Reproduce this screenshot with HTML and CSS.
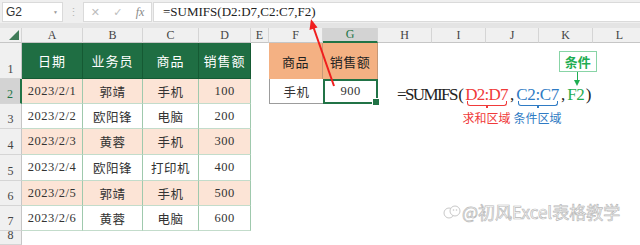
FILE: index.html
```html
<!DOCTYPE html>
<html lang="zh-CN">
<head>
    <meta charset="UTF-8">
    <meta name="viewport" content="width=device-width, initial-scale=1.0">
    <title>SUMIFS 示例</title>
    <link rel="stylesheet" href="styles.css">
</head>
<body>
    <div class="fbar">
        <div class="namebox">G2 <span class="dd">&#9660;</span></div>
        <div class="grip">&#8942;</div>
        <div class="fbtns"><span>&#10005;</span><span>&#10003;</span><span class="fxi">fx</span></div>
        <div class="finput">=SUMIFS(D2:D7,C2:C7,F2)</div>
    </div>
    <div class="gap"></div>

    <div class="sheet">
        <div class="ch corner"><span class="tri"></span></div>
        <div class="ch">A</div><div class="ch">B</div><div class="ch">C</div><div class="ch">D</div>
        <div class="ch">E</div><div class="ch">F</div><div class="ch sel-ch">G</div><div class="ch">H</div>
        <div class="ch">I</div><div class="ch">J</div><div class="ch">K</div><div class="ch">L</div>

        <div class="rh">1</div>
        <div class="hd">日期</div><div class="hd">业务员</div><div class="hd">商品</div><div class="hd">销售额</div>
        <div></div>
        <div class="og">商品</div><div class="og">销售额</div>
        <div></div><div></div><div></div><div></div><div></div>

        <div class="rh sel-rh">2</div>
        <div class="pk">2023/2/1</div><div class="pk">郭靖</div><div class="pk">手机</div><div class="pk">100</div>
        <div></div>
        <div class="bx">手机</div><div class="act">900</div>
        <div></div><div></div><div></div><div></div><div></div>

        <div class="rh">3</div>
        <div class="wt">2023/2/2</div><div class="wt">欧阳锋</div><div class="wt">电脑</div><div class="wt">200</div>
        <div></div><div></div><div></div><div></div><div></div><div></div><div></div><div></div>

        <div class="rh">4</div>
        <div class="pk">2023/2/3</div><div class="pk">黄蓉</div><div class="pk">手机</div><div class="pk">300</div>
        <div></div><div></div><div></div><div></div><div></div><div></div><div></div><div></div>

        <div class="rh">5</div>
        <div class="wt">2023/2/4</div><div class="wt">欧阳锋</div><div class="wt">打印机</div><div class="wt">400</div>
        <div></div><div></div><div></div><div></div><div></div><div></div><div></div><div></div>

        <div class="rh">6</div>
        <div class="pk">2023/2/5</div><div class="pk">郭靖</div><div class="pk">手机</div><div class="pk">500</div>
        <div></div><div></div><div></div><div></div><div></div><div></div><div></div><div></div>

        <div class="rh">7</div>
        <div class="wt">2023/2/6</div><div class="wt">黄蓉</div><div class="wt">电脑</div><div class="wt">600</div>
        <div></div><div></div><div></div><div></div><div></div><div></div><div></div><div></div>

        <div class="rh">8</div>
        <div></div><div></div><div></div><div></div><div></div><div></div>
        <div></div><div></div><div></div><div></div><div></div><div></div>
    </div>

    <!-- 公式说明 -->
    <div class="note"><span class="fn">=SUMIFS</span><span class="p">(</span><span class="seg red s1">D2:D7<i class="brk"></i><b class="lab">求和区域</b></span><span class="p">,</span><span class="seg blue s2">C2:C7<i class="brk"></i><b class="lab">条件区域</b></span><span class="p">,</span><span class="seg green s3">F2<span class="tag">条件</span><i class="down"></i></span><span class="p">)</span></div>

    <svg class="arrow" width="640" height="245" viewBox="0 0 640 245">
        <line x1="334" y1="86" x2="313" y2="26" stroke="#f01e1e" stroke-width="2"/>
        <polygon points="311,19 317.5,27.5 309.5,30" fill="#f01e1e"/>
    </svg>

    <div class="mark">
        <svg width="18" height="16" viewBox="0 0 18 16"><circle cx="6" cy="9" r="5" fill="none" stroke="#c8c8c8"/><circle cx="12" cy="7" r="5" fill="#fff" stroke="#c8c8c8"/><circle cx="10.5" cy="6" r="0.8" fill="#c8c8c8"/><circle cx="13.5" cy="6" r="0.8" fill="#c8c8c8"/></svg>
        <span>@初风Excel表格教学</span>
    </div>
</body>
</html>
```

FILE: styles.css
```css
* {
    box-sizing: border-box;
    margin: 0;
    padding: 0;
}
body {
    width: 640px;
    height: 245px;
    overflow: hidden;
    position: relative;
    background-color: #ffffff;
    font-family: "Liberation Serif", "Noto Sans CJK SC", serif;
    color: #333;
}

/* 编辑栏 */
.fbar {
    display: flex;
    align-items: center;
    height: 23px;
    padding: 2px 0 1px 2px;
    background-color: #efefef;
}
.namebox {
    width: 61px;
    height: 20px;
    display: flex;
    align-items: center;
    justify-content: space-between;
    padding: 0 4px 0 3px;
    background-color: #fff;
    border: 1px solid #dadada;
    font-family: "Liberation Sans", "Noto Sans CJK SC", sans-serif;
    font-size: 12px;
    color: #333;
}
.dd {
    font-size: 5px;
    color: #999;
}
.grip {
    width: 20px;
    text-align: center;
    color: #b5b5b5;
    font-size: 11px;
}
.fbtns {
    width: 69px;
    height: 20px;
    display: flex;
    align-items: center;
    justify-content: space-around;
    background-color: #fff;
    border: 1px solid #dadada;
    font-family: "DejaVu Sans", sans-serif;
    font-size: 11px;
    color: #bdbdbd;
}
.fxi {
    font-family: "Liberation Serif", serif;
    font-style: italic;
    font-size: 12px;
    color: #888;
}
.finput {
    flex: 1;
    height: 20px;
    margin-left: 1px;
    padding-left: 9px;
    background-color: #fff;
    border: 1px solid #dadada;
    border-right: none;
    font-size: 13px;
    line-height: 18px;
    color: #222;
    white-space: nowrap;
}
.gap {
    height: 5px;
    background-color: #e4e4e4;
}

/* 表格 */
.sheet {
    display: grid;
    grid-template-columns: 22px 61px 60px 56px 52px 18px 54px 55px 54px 54px 53px 54px 54px;
    grid-template-rows: 15px 36px 25px 25px 26px 26px 25px 25px 14px;
    width: 647px;
}
.sheet > div {
    display: flex;
    align-items: center;
    justify-content: center;
    font-size: 12.5px;
    letter-spacing: 0.5px;
    white-space: nowrap;
}
.ch {
    background-color: #f0f0f0;
    border-right: 1px solid #d5d5d5;
    border-bottom: 1px solid #c6c6c6;
    color: #444;
}
.sheet > .ch, .sheet > .rh {
    font-size: 12px;
    letter-spacing: 0;
}
.corner {
    justify-content: flex-end !important;
    align-items: flex-end !important;
    padding: 0 2px 2px 0;
}
.tri {
    width: 0;
    height: 0;
    border-left: 10px solid transparent;
    border-bottom: 10px solid #3f7b58;
}
.rh {
    align-items: flex-end !important;
    padding-bottom: 1px;
    background-color: #f0f0f0;
    border-right: 1px solid #c6c6c6;
    border-bottom: 1px solid #d5d5d5;
    color: #444;
}
.sel-ch {
    background-color: #d3d3d3;
    color: #217346;
    border-bottom: 2px solid #217346;
}
.sel-rh {
    background-color: #d3d3d3;
    color: #217346;
    border-right: 2px solid #217346;
}
.hd {
    background-color: #1f6e43;
    color: #fff;
    border-right: 1px solid #155a33;
    border-bottom: 1px solid #155a33;
    font-size: 13px !important;
    letter-spacing: 1px !important;
}
.pk, .wt {
    border-right: 1px solid #9fc9ad;
    border-bottom: 1px solid #c3dccb;
}
.pk {
    background-color: #fce4d6;
}
.wt {
    background-color: #fff;
}
.og {
    background-color: #f4b183;
    border-right: 1px solid #c79877;
    color: #222;
    font-size: 13px !important;
}
.bx {
    border-left: 1px solid #9c9c9c;
    border-bottom: 1px solid #9c9c9c;
}
.act {
    position: relative;
    border: 2px solid #217346;
}
.act::after {
    content: "";
    position: absolute;
    right: -4px;
    bottom: -4px;
    width: 6px;
    height: 6px;
    background-color: #217346;
    border: 1px solid #fff;
}

/* 公式说明 */
.note {
    position: absolute;
    left: 397px;
    top: 85px;
    font-size: 17px;
    line-height: 20px;
    white-space: nowrap;
    color: #222;
}
.fn {
    letter-spacing: -1.6px;
}
.p {
    display: inline-block;
    width: 8.5px;
    text-align: center;
}
.seg {
    position: relative;
}
.s1 { letter-spacing: -0.75px; }
.s2 { letter-spacing: -0.4px; }
.s3 { letter-spacing: -0.4px; }
.red { color: #f03a3a; }
.blue { color: #2f7bc4; }
.green { color: #1fad52; }
.brk {
    position: absolute;
    left: 2px;
    right: 1px;
    top: 16px;
    height: 5px;
    border: 1.5px solid currentColor;
    border-top: none;
    border-radius: 0 0 3px 3px;
}
.brk::after {
    content: "";
    position: absolute;
    left: 50%;
    top: 100%;
    width: 1.5px;
    height: 3px;
    margin-left: -1px;
    background-color: currentColor;
}
.lab {
    position: absolute;
    left: 50%;
    top: 26px;
    transform: translateX(-50%);
    font-family: "Noto Sans CJK SC", sans-serif;
    font-weight: normal;
    font-size: 12px;
    line-height: 14px;
    letter-spacing: 0;
}
.tag {
    position: absolute;
    left: 50%;
    top: -34px;
    width: 38px;
    height: 21px;
    margin-left: -17px;
    border: 1px solid #88d4a6;
    background-color: #fff;
    font-family: "Noto Sans CJK SC", sans-serif;
    font-weight: bold;
    font-size: 13px;
    line-height: 19px;
    letter-spacing: 0;
    text-align: center;
}
.down {
    position: absolute;
    left: 50%;
    top: -13px;
    width: 1.5px;
    height: 9px;
    margin-left: 1px;
    background-color: currentColor;
}
.down::after {
    content: "";
    position: absolute;
    left: -3px;
    top: 8px;
    border-left: 3.75px solid transparent;
    border-right: 3.75px solid transparent;
    border-top: 6px solid currentColor;
}

.arrow {
    position: absolute;
    left: 0;
    top: 0;
    pointer-events: none;
}

.mark {
    position: absolute;
    left: 443px;
    top: 202px;
    display: flex;
    align-items: center;
    gap: 1px;
    font-family: "Noto Sans CJK SC", sans-serif;
    font-size: 17px;
    line-height: 20px;
    color: #fff;
    -webkit-text-stroke: 0.7px #b9b9b9;
}
```
